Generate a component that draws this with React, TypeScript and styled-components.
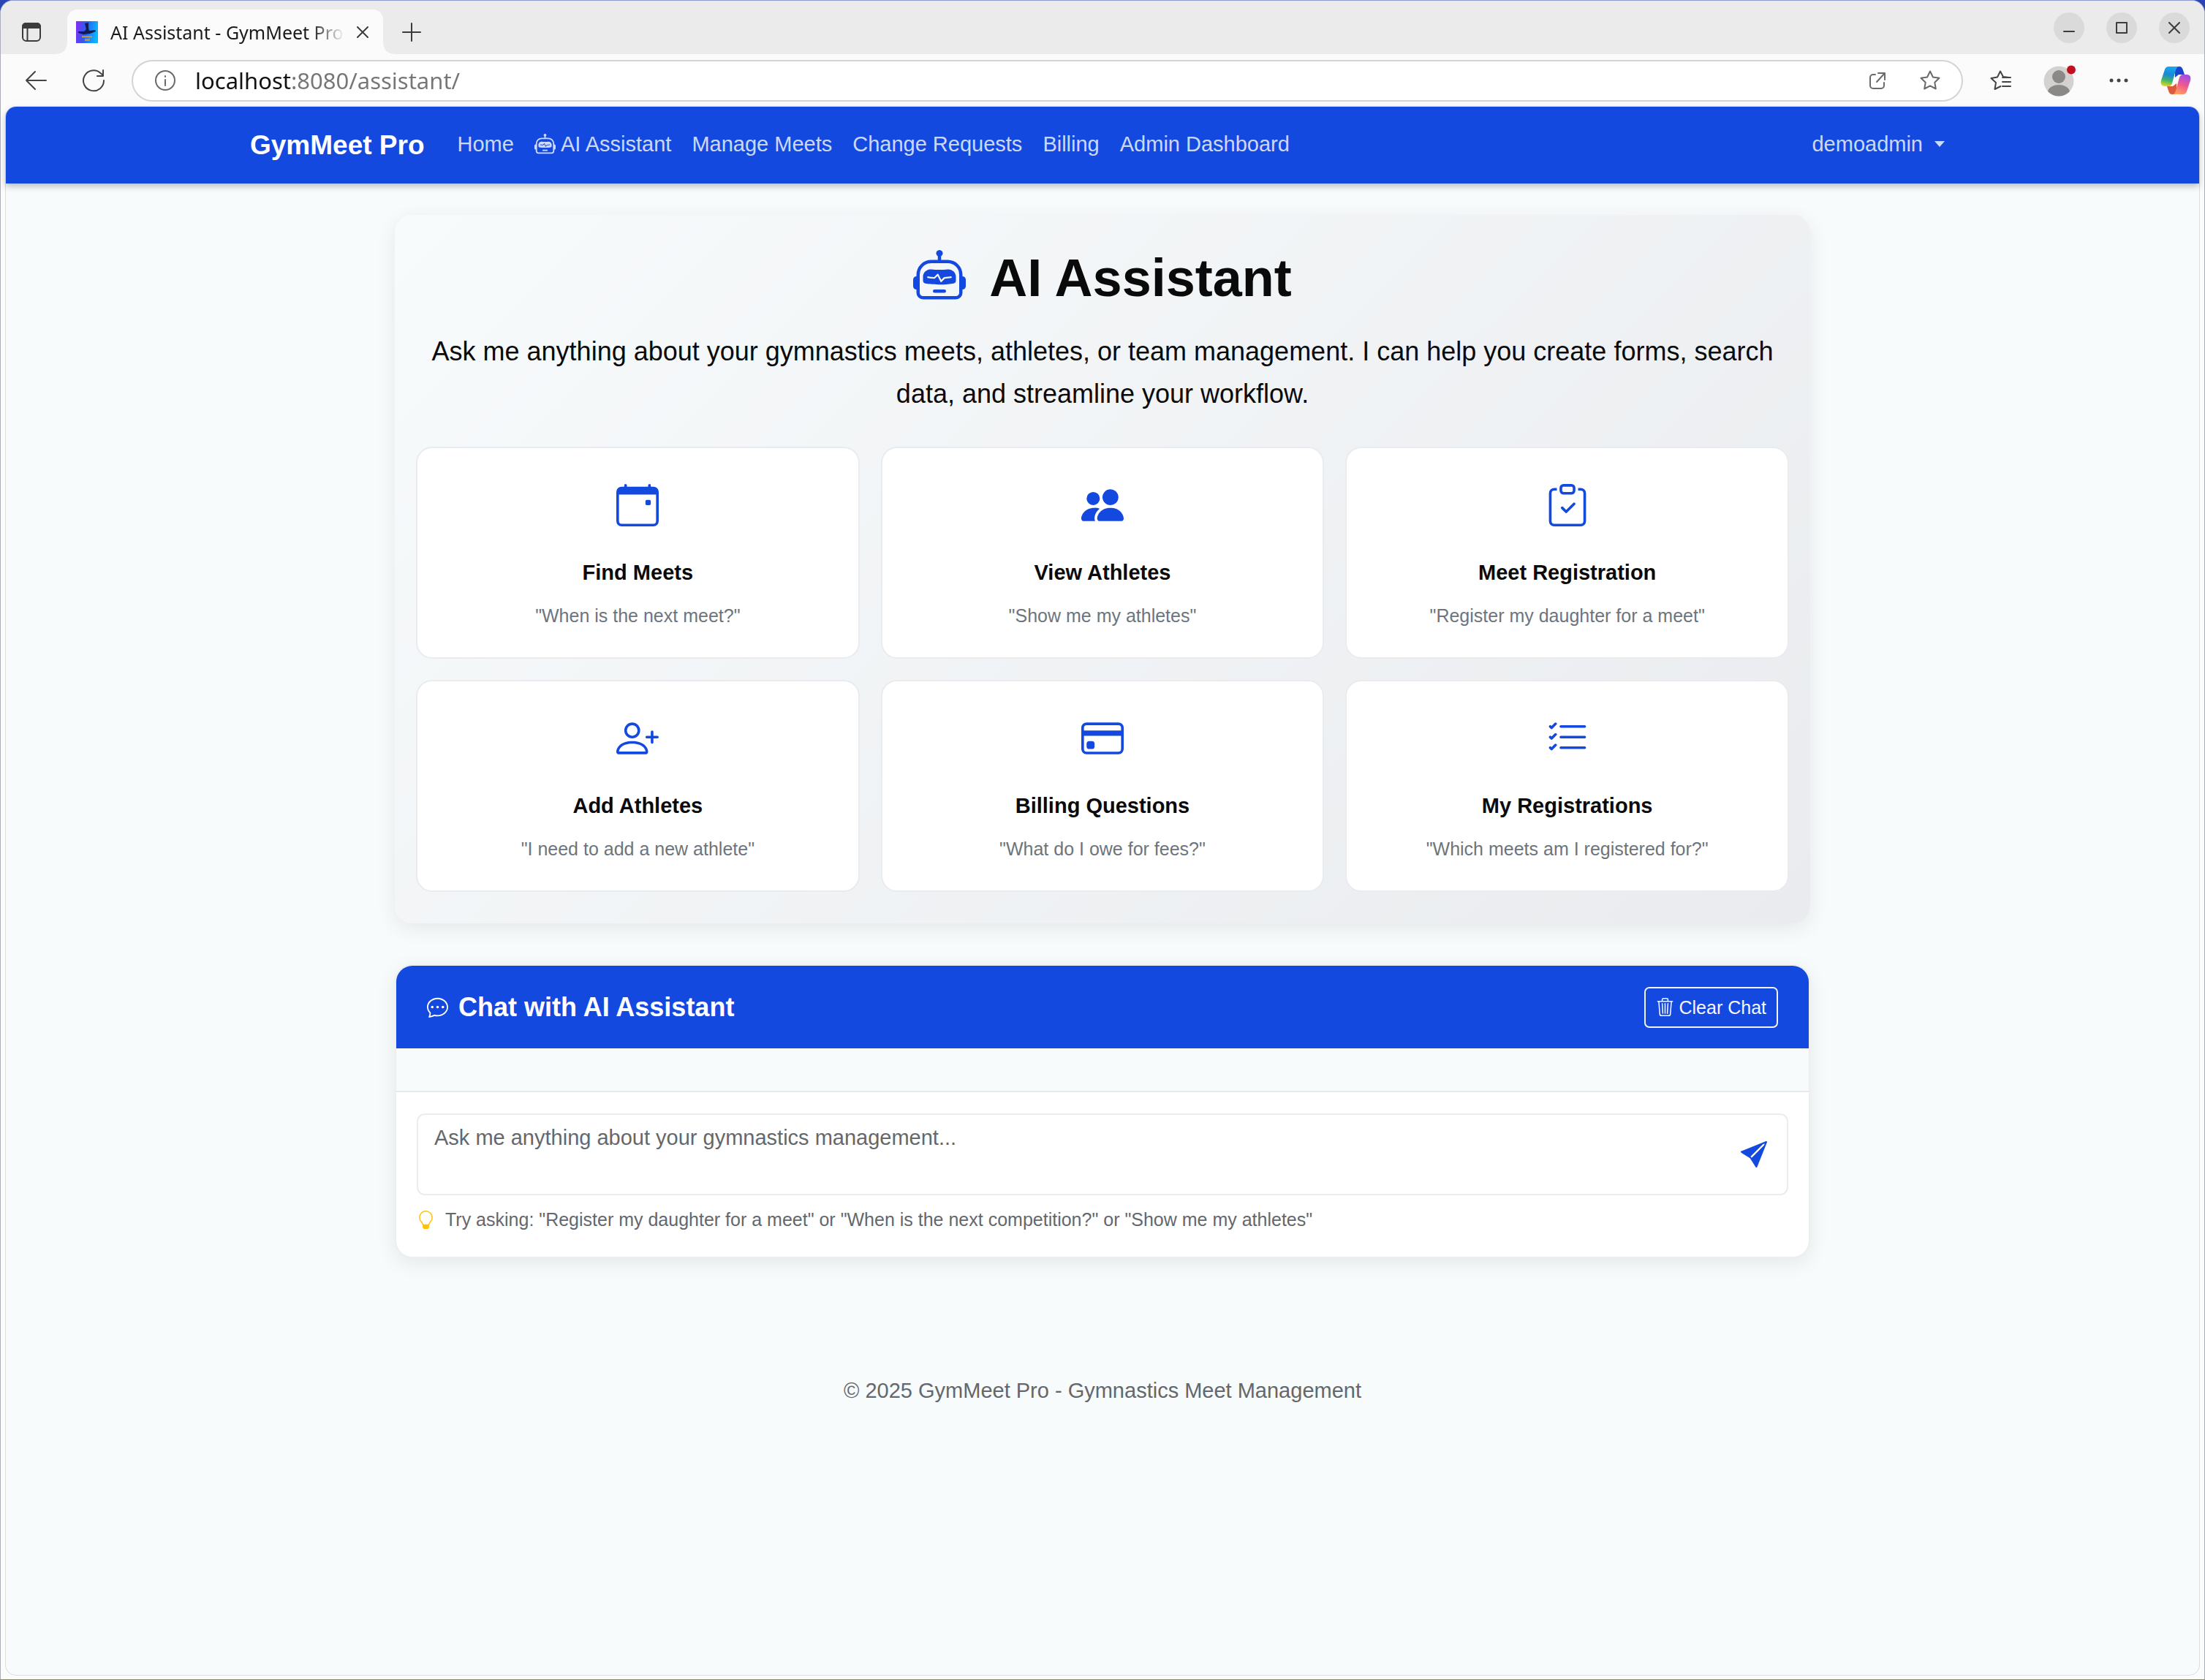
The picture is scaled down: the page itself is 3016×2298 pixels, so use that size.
import React from "react";
import styled, { createGlobalStyle } from "styled-components";
import type { IconType } from "react-icons";
import {
  BsCalendarEvent,
  BsChatDots,
  BsClipboardCheck,
  BsCreditCard,
  BsLightbulb,
  BsListCheck,
  BsPeopleFill,
  BsPersonPlus,
  BsRobot,
  BsSendFill,
  BsTrash3,
} from "react-icons/bs";

const blue = "#1449e0";
const pageTint = "#f7fbfc";
const uiFont = `"Noto Sans", "Open Sans", sans-serif`;
const siteFont = `"Liberation Sans", Arial, sans-serif`;

const GlobalStyle = createGlobalStyle`
  *, *::before, *::after { box-sizing: border-box; }
  body { margin: 0; background: #2a44b4; font-family: ${siteFont}; color: #0a0a0a; }
  button, input, textarea { font: inherit; color: inherit; }
  button { border: 0; padding: 0; background: none; cursor: pointer; }
  h1, h2, h3, p { margin: 0; }
  a { text-decoration: none; color: inherit; }
  svg { display: block; flex: none; }
`;

/* ---------- browser window ---------- */

const Window = styled.div`
  min-height: 100vh;
  display: flex;
  flex-direction: column;
  background: #fbfbfb;
  border: 1px solid #a9adb5;
  border-top-color: #8f9bd0;
  border-bottom-color: #85895a;
  border-radius: 18px 18px 0 0;
  overflow: hidden;
`;

const TitleBar = styled.div`
  display: flex;
  align-items: stretch;
  height: 73px;
  padding: 0 20px 0 28px;
  background: #ebebeb;
  color: #3c3c3c;
`;

const BarButton = styled.button`
  display: flex;
  align-items: center;
  justify-content: center;
  margin-top: 12px;
`;

const Tab = styled.div`
  position: relative;
  display: flex;
  align-items: center;
  width: 432px;
  margin: 12px 26px 0 35px;
  padding: 0 20px 0 12px;
  gap: 17px;
  background: #fbfbfb;
  border-radius: 14px 14px 0 0;

  &::before,
  &::after {
    content: "";
    position: absolute;
    bottom: 0;
    width: 14px;
    height: 14px;
  }
  &::before {
    right: 100%;
    background: radial-gradient(circle at 0 0, transparent 13px, #fbfbfb 14px);
  }
  &::after {
    left: 100%;
    background: radial-gradient(circle at 100% 0, transparent 13px, #fbfbfb 14px);
  }
`;

const TabTitle = styled.span`
  flex: 1;
  font: 25px/36px ${uiFont};
  color: #1a1a1a;
  white-space: nowrap;
  overflow: hidden;
  mask-image: linear-gradient(to right, #000 86%, transparent 100%);
`;

const WindowButtons = styled.div`
  display: flex;
  align-items: flex-start;
  gap: 30px;
  margin-left: auto;
  padding-top: 16px;
`;

const RoundButton = styled.button`
  display: flex;
  align-items: center;
  justify-content: center;
  width: 42px;
  height: 42px;
  border-radius: 50%;
  background: #dadada;
`;

const Toolbar = styled.div`
  display: flex;
  align-items: center;
  height: 72px;
  padding: 0 18px 0 32px;
  color: #444;
`;

const NavButtons = styled.div`
  display: flex;
  gap: 47px;
  margin-right: 36px;
`;

const AddressBar = styled.div`
  flex: 1;
  display: flex;
  align-items: center;
  height: 57px;
  padding: 0 28px 0 30px;
  border: 2px solid #d4d4d4;
  border-radius: 29px;
  background: #fff;
  color: #6a6a6a;
`;

const AddressInput = styled.input`
  flex: 1;
  min-width: 0;
  margin-left: 27px;
  padding: 0;
  border: 0;
  outline: 0;
  font: 31px/42px ${uiFont};
  color: #767676;
  background: linear-gradient(to right, #111 132px, #767676 132px);
  background-clip: text;
  -webkit-text-fill-color: transparent;
`;

const AddressActions = styled.div`
  display: flex;
  align-items: center;
  gap: 45px;
`;

const ToolbarActions = styled.div`
  display: flex;
  align-items: center;
  gap: 44px;
  margin-left: 36px;
`;

/* ---------- site ---------- */

const Page = styled.div`
  flex: 1;
  margin: 0 7px 6px;
  border-radius: 14px;
  background: ${pageTint};
  box-shadow: 0 0 0 1px #dcdee4;
`;

const Navbar = styled.header`
  display: flex;
  justify-content: center;
  height: 105px;
  background: ${blue};
  border-radius: 14px 14px 0 0;
  box-shadow: 0 4px 8px rgba(0, 0, 0, 0.24);
`;

const NavInner = styled.div`
  display: flex;
  align-items: center;
  width: 100%;
  max-width: 2332px;
`;

const Brand = styled.a`
  margin-right: 31px;
  font-size: 37px;
  line-height: 56px;
  font-weight: 700;
  color: #fff;
`;

const NavLinks = styled.nav`
  display: flex;
  flex: 1;
`;

const NavLink = styled.a`
  display: flex;
  align-items: center;
  gap: 7px;
  padding: 12px 14px 15px;
  font-size: 29px;
  line-height: 46px;
  color: rgba(255, 255, 255, 0.8);
`;

const UserMenu = styled.button`
  display: flex;
  align-items: center;
  gap: 16px;
  padding: 12px 14px 15px;
  font-size: 29px;
  line-height: 46px;
  color: rgba(255, 255, 255, 0.8);

  &::after {
    content: "";
    border: 7px solid transparent;
    border-top: 8px solid currentColor;
    border-bottom: 0;
  }
`;

const Main = styled.main`
  display: flex;
  flex-direction: column;
  gap: 56px;
  width: 100%;
  max-width: 1936px;
  margin: 0 auto;
  padding: 43px 0 0;
`;

const Panel = styled.section`
  border-radius: 24px;
  box-shadow: 0 7px 28px rgba(0, 0, 0, 0.08);
`;

const Hero = styled(Panel)`
  padding: 43px 29px;
  text-align: center;
  background: linear-gradient(135deg, #f8fbfc 0%, #e9ebee 100%);
`;

const HeroTitle = styled.h1`
  display: flex;
  align-items: center;
  justify-content: center;
  gap: 32px;
  font-size: 72px;
  line-height: 86px;
  font-weight: 700;

  svg {
    color: ${blue};
    margin-bottom: 4px;
  }
`;

const Lead = styled.p`
  margin: 29px 0 43px;
  font-size: 36px;
  line-height: 58px;
`;

const Cards = styled.div`
  display: grid;
  grid-template-columns: repeat(3, 1fr);
  gap: 29px;
`;

const Card = styled.button`
  display: flex;
  flex-direction: column;
  align-items: center;
  padding: 49px 29px 37px;
  border: 2px solid #e9ebee;
  border-radius: 22px;
  background: #fff;

  svg {
    color: ${blue};
    margin-bottom: 46px;
  }
`;

const CardTitle = styled.h3`
  font-size: 29px;
  line-height: 35px;
  font-weight: 700;
`;

const CardText = styled.p`
  margin-top: 21px;
  font-size: 25px;
  line-height: 40px;
  color: #6c757d;
`;

const Chat = styled(Panel)`
  border: 2px solid #eceef0;
  background: #fff;
`;

const ChatHeader = styled.div`
  display: flex;
  align-items: center;
  justify-content: space-between;
  height: 113px;
  padding: 0 42px;
  border-radius: 22px 22px 0 0;
  background: ${blue};
  color: #fff;
`;

const ChatTitle = styled.h2`
  display: flex;
  align-items: center;
  gap: 14px;
  font-size: 36px;
  line-height: 43px;
  font-weight: 700;
`;

const ClearButton = styled.button`
  display: flex;
  align-items: center;
  gap: 7px;
  height: 56px;
  padding: 0 14px;
  border: 2px solid #f0f3fa;
  border-radius: 7px;
  font-size: 25px;
  line-height: 38px;
  color: #f4f6fb;
`;

const Messages = styled.div`
  padding: 29px;
  background: ${pageTint};
  border-bottom: 2px solid #e6e8ec;
`;

const Composer = styled.form`
  padding: 29px 28px 31px;
`;

const InputWrap = styled.div`
  position: relative;
`;

const MessageBox = styled.textarea`
  display: block;
  width: 100%;
  padding: 10px 100px 12px 22px;
  border: 2px solid #ececef;
  border-radius: 11px;
  outline: 0;
  resize: none;
  overflow: hidden;
  background: #fff;
  font-size: 29px;
  line-height: 43px;

  &::placeholder {
    color: #64676b;
    opacity: 1;
  }
`;

const SendButton = styled.button`
  position: absolute;
  top: 0;
  bottom: 0;
  right: 29px;
  display: flex;
  align-items: center;
  color: ${blue};
`;

const Hint = styled.p`
  display: flex;
  align-items: center;
  gap: 14px;
  margin-top: 13px;
  font-size: 25px;
  line-height: 40px;
  color: #64676b;

  svg {
    color: #ffc107;
  }
`;

const Footer = styled.footer`
  padding: 158px 0 58px;
  text-align: center;
  font-size: 29px;
  line-height: 46px;
  color: #64676b;
`;

/* ---------- browser drawings ---------- */

type LineProps = { w: number; h?: number; sw?: number; children: React.ReactNode };

const Line = ({ w, h = w, sw = 2, children }: LineProps) => (
  <svg
    width={w}
    height={h}
    viewBox={`0 0 ${w} ${h}`}
    fill="none"
    stroke="currentColor"
    strokeWidth={sw}
    strokeLinecap="round"
    strokeLinejoin="round"
    aria-hidden="true"
  >
    {children}
  </svg>
);

const TabsIcon = () => (
  <Line w={28}>
    <rect x="2" y="2" width="24" height="24" rx="5" />
    <path d="M2 8V6a4 4 0 0 1 4-4h16a4 4 0 0 1 4 4v2z" fill="currentColor" />
    <path d="M8.500 8v18" />
  </Line>
);

const Favicon = () => (
  <svg width="30" height="30" viewBox="0 0 30 30" aria-hidden="true">
    <defs>
      <linearGradient id="fav" x1="0" y1="0" x2="1" y2="0.2">
        <stop offset="0" stopColor="#8a2bf5" />
        <stop offset="0.5" stopColor="#2a5cf0" />
        <stop offset="1" stopColor="#08b4ff" />
      </linearGradient>
    </defs>
    <rect width="30" height="30" fill="url(#fav)" />
    <path d="M12 3l5-1 0 7 1 4 8-1 1 2-8 3-9 1-7-2 0-2 8 0 3-3z" fill="#101c50" />
    <path d="M8 20h14v2.500H8zM12 24h7v3h-7z" fill="#b99150" />
  </svg>
);

const StarPath = "M15 2.500l3.900 8 8.600 1.200-6.200 6.100 1.500 8.700L15 22.400l-7.800 4.100 1.500-8.700L2.500 11.700l8.600-1.200z";

const Avatar = () => (
  <svg width="46" height="46" viewBox="0 0 46 46" aria-hidden="true">
    <defs>
      <clipPath id="face">
        <circle cx="21" cy="24" r="20.500" />
      </clipPath>
    </defs>
    <circle cx="21" cy="24" r="20.500" fill="#d3d2d1" />
    <g clipPath="url(#face)" fill="#8b8988">
      <circle cx="21" cy="18" r="9" />
      <ellipse cx="21" cy="39" rx="15" ry="10" />
    </g>
    <circle cx="38" cy="8.500" r="6" fill="#c50f1f" />
  </svg>
);

const Copilot = () => (
  <svg width="42" height="40" viewBox="0 0 42 40" aria-hidden="true">
    <defs>
      <linearGradient id="cpA" x1="0.5" y1="0" x2="0.3" y2="1">
        <stop offset="0" stopColor="#19a8f0" />
        <stop offset="0.4" stopColor="#1788d8" />
        <stop offset="0.7" stopColor="#3fb56b" />
        <stop offset="1" stopColor="#e3d81f" />
      </linearGradient>
      <linearGradient id="cpB" x1="0.7" y1="0" x2="0.3" y2="1">
        <stop offset="0" stopColor="#a24bea" />
        <stop offset="0.5" stopColor="#f0598e" />
        <stop offset="1" stopColor="#ffa45c" />
      </linearGradient>
    </defs>
    <path d="M20 1h6c3 0 4 2 5 5l2 6h-8l-5 4z" fill="#1b45cf" />
    <path d="M22 39h-6c-3 0-4-2-5-5l-2-6h8l5-4z" fill="#dd5a3d" />
    <path d="M11 1h15c-3 0-4 2-5 5l-5 18c-1 3-3 4-5 4H6c-5 0-6-4-5-8L6 5c1-3 3-4 5-4z" fill="url(#cpA)" />
    <path d="M31 39H16c3 0 4-2 5-5l5-18c1-3 3-4 5-4h5c5 0 6 4 5 8l-5 15c-1 3-3 4-5 4z" fill="url(#cpB)" />
  </svg>
);

/* ---------- content ---------- */

const links: { label: string; icon?: IconType }[] = [
  { label: "Home" },
  { label: "AI Assistant", icon: BsRobot },
  { label: "Manage Meets" },
  { label: "Change Requests" },
  { label: "Billing" },
  { label: "Admin Dashboard" },
];

const prompts: { icon: IconType; title: string; text: string }[] = [
  { icon: BsCalendarEvent, title: "Find Meets", text: "When is the next meet?" },
  { icon: BsPeopleFill, title: "View Athletes", text: "Show me my athletes" },
  { icon: BsClipboardCheck, title: "Meet Registration", text: "Register my daughter for a meet" },
  { icon: BsPersonPlus, title: "Add Athletes", text: "I need to add a new athlete" },
  { icon: BsCreditCard, title: "Billing Questions", text: "What do I owe for fees?" },
  { icon: BsListCheck, title: "My Registrations", text: "Which meets am I registered for?" },
];

const BrowserChrome = () => (
  <>
    <TitleBar>
      <BarButton aria-label="Tab actions">
        <TabsIcon />
      </BarButton>
      <Tab>
        <Favicon />
        <TabTitle>AI Assistant - GymMeet Pro</TabTitle>
        <button aria-label="Close tab">
          <Line w={16}>
            <path d="M1 1l14 14M15 1L1 15" />
          </Line>
        </button>
      </Tab>
      <BarButton aria-label="New tab">
        <Line w={26}>
          <path d="M13 1v24M1 13h24" />
        </Line>
      </BarButton>
      <WindowButtons>
        <RoundButton aria-label="Minimize">
          <Line w={16}>
            <path d="M1 13h14" />
          </Line>
        </RoundButton>
        <RoundButton aria-label="Maximize">
          <Line w={16}>
            <path d="M1 1h14v14H1z" />
          </Line>
        </RoundButton>
        <RoundButton aria-label="Close">
          <Line w={16}>
            <path d="M1 1l14 14M15 1L1 15" />
          </Line>
        </RoundButton>
      </WindowButtons>
    </TitleBar>
    <Toolbar>
      <NavButtons>
        <button aria-label="Back">
          <Line w={32} h={30}>
            <path d="M15 3L3 15l12 12M3 15h27" />
          </Line>
        </button>
        <button aria-label="Reload">
          <Line w={32} h={32}>
            <path d="M30 16A14 14 0 1 1 25.500 6L29 9M29 2v8h-8" />
          </Line>
        </button>
      </NavButtons>
      <AddressBar>
        <Line w={28}>
          <circle cx="14" cy="14" r="13" />
          <path d="M14 13v8M14 8v1" />
        </Line>
        <AddressInput aria-label="Address" defaultValue="localhost:8080/assistant/" />
        <AddressActions>
          <button aria-label="Open in app">
            <Line w={24}>
              <path d="M9 4H6a4 4 0 0 0-4 4v11a4 4 0 0 0 4 4h11a4 4 0 0 0 4-4v-4M13 2h9v9M22 2L11 14" />
            </Line>
          </button>
          <button aria-label="Add to favorites">
            <Line w={30}>
              <path d={StarPath} />
            </Line>
          </button>
        </AddressActions>
      </AddressBar>
      <ToolbarActions>
        <button aria-label="Favorites">
          <Line w={30}>
            <path d="M27 11l-8-1-4-7.500-4 8L2.500 12l6.500 6-1.500 9 8-4M18 11h11M18 17h11M18 23h11" />
          </Line>
        </button>
        <button aria-label="Profile">
          <Avatar />
        </button>
        <button aria-label="Settings and more">
          <svg width="26" height="6" viewBox="0 0 26 6" fill="currentColor" aria-hidden="true">
            <circle cx="3" cy="3" r="2.500" />
            <circle cx="13" cy="3" r="2.500" />
            <circle cx="23" cy="3" r="2.500" />
          </svg>
        </button>
        <button aria-label="Copilot">
          <Copilot />
        </button>
      </ToolbarActions>
    </Toolbar>
  </>
);

export default function App() {
  return (
    <Window>
      <GlobalStyle />
      <BrowserChrome />
      <Page>
        <Navbar>
          <NavInner>
            <Brand href="#">GymMeet Pro</Brand>
            <NavLinks>
              {links.map(({ label, icon: Icon }) => (
                <NavLink key={label} href="#">
                  {Icon && <Icon size={29} />}
                  {label}
                </NavLink>
              ))}
            </NavLinks>
            <UserMenu aria-haspopup="menu">demoadmin</UserMenu>
          </NavInner>
        </Navbar>
        <Main>
          <Hero>
            <HeroTitle>
              <BsRobot size={72} />
              AI Assistant
            </HeroTitle>
            <Lead>
              Ask me anything about your gymnastics meets, athletes, or team management. I can help you
              create forms, search data, and streamline your workflow.
            </Lead>
            <Cards>
              {prompts.map(({ icon: Icon, title, text }) => (
                <Card key={title}>
                  <Icon size={58} />
                  <CardTitle>{title}</CardTitle>
                  <CardText>"{text}"</CardText>
                </Card>
              ))}
            </Cards>
          </Hero>
          <Chat>
            <ChatHeader>
              <ChatTitle>
                <BsChatDots size={29} />
                Chat with AI Assistant
              </ChatTitle>
              <ClearButton>
                <BsTrash3 size={25} />
                Clear Chat
              </ClearButton>
            </ChatHeader>
            <Messages />
            <Composer onSubmit={(e) => e.preventDefault()}>
              <InputWrap>
                <MessageBox
                  rows={2}
                  aria-label="Message"
                  placeholder="Ask me anything about your gymnastics management..."
                />
                <SendButton type="submit" aria-label="Send">
                  <BsSendFill size={36} />
                </SendButton>
              </InputWrap>
              <Hint>
                <BsLightbulb size={25} />
                Try asking: "Register my daughter for a meet" or "When is the next competition?" or "Show me
                my athletes"
              </Hint>
            </Composer>
          </Chat>
        </Main>
        <Footer>© 2025 GymMeet Pro - Gymnastics Meet Management</Footer>
      </Page>
    </Window>
  );
}
